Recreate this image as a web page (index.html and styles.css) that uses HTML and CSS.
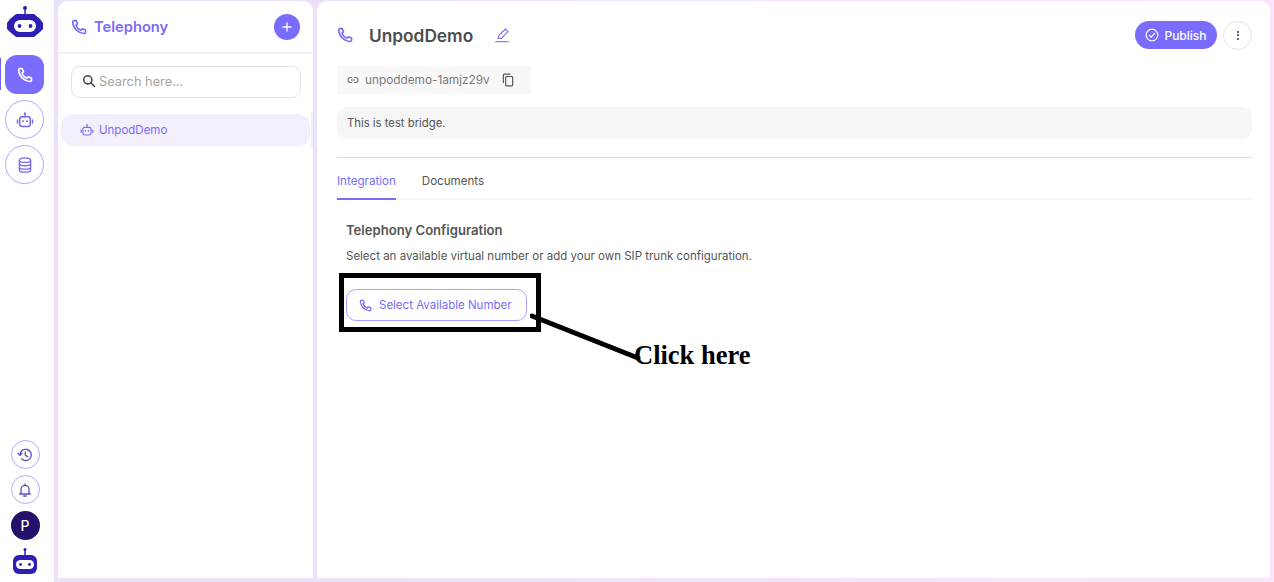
FILE: index.html
```html
<!DOCTYPE html>
<html lang="en">
<head>
<meta charset="utf-8">
<title>Telephony</title>
<link rel="stylesheet" href="styles.css">
</head>
<body>
<svg class="defs" width="0" height="0" aria-hidden="true">
  <defs>
    <symbol id="phone" viewBox="0 0 24 24"><path d="M4.500 2.500h3.300l2 4.800-2.400 2a14 14 0 0 0 7.600 7.600l2-2.400 4.800 2v3.300a2 2 0 0 1-2.200 2C10.500 21 3 13.500 2.500 4.700a2 2 0 0 1 2-2.200z" fill="none" stroke="currentColor" stroke-width="2.400" stroke-linejoin="round"/></symbol>
    <symbol id="bot" viewBox="0 0 24 24"><g fill="none" stroke="currentColor" stroke-width="2" stroke-linecap="round" stroke-linejoin="round"><rect x="5" y="7.500" width="14" height="13" rx="3"/><path d="M12 7.500V4M2 12v4M22 12v4"/></g><circle cx="12" cy="3" r="1.300" fill="currentColor"/><circle cx="9.500" cy="13.500" r="1.300" fill="currentColor"/><circle cx="14.500" cy="13.500" r="1.300" fill="currentColor"/></symbol>
  </defs>
</svg>

<div class="app">
  <nav class="rail">
    <svg class="logo" viewBox="0 0 36 32"><path d="M18 1v8" stroke="#2d1fb5" stroke-width="1.500"/><circle cx="18" cy="2" r="2" fill="#2d1fb5"/><path d="M9 8h18l6 5 3 4v6l-3 3-6 5H9l-6-5-3-3v-6l3-4z" fill="#2d1fb5"/><rect x="7" y="14" width="22" height="12" rx="6" fill="#fff"/><circle cx="12.500" cy="20" r="1.900" fill="#2d1fb5"/><circle cx="23.500" cy="20" r="1.900" fill="#2d1fb5"/></svg>
    <div class="rail-top">
      <a class="rail-active"><svg class="ic16"><use href="#phone"/></svg></a>
      <a class="rail-round"><svg class="ic18"><use href="#bot"/></svg></a>
      <a class="rail-round"><svg class="ic18" viewBox="0 0 24 24"><g fill="none" stroke="currentColor" stroke-width="1.800"><ellipse cx="12" cy="5.500" rx="7.500" ry="3"/><path d="M4.500 5.500v13c0 1.700 3.400 3 7.500 3s7.500-1.300 7.500-3v-13M4.500 10c0 1.700 3.400 3 7.500 3s7.500-1.300 7.500-3M4.500 14.500c0 1.700 3.400 3 7.500 3s7.500-1.300 7.500-3"/></g></svg></a>
    </div>
    <div class="rail-bottom">
      <a class="rail-small"><svg class="ic16" viewBox="0 0 24 24"><g fill="none" stroke="#5a4fc4" stroke-width="2" stroke-linecap="round" stroke-linejoin="round"><path d="M4.500 12a8.500 8.500 0 1 1 2.600 6.100"/><path d="M1.500 9.500l3 3 3-3M12.500 7.500v5l3.500 2"/></g></svg></a>
      <a class="rail-small"><svg class="ic16" viewBox="0 0 24 24"><g fill="none" stroke="#5a4fc4" stroke-width="2" stroke-linecap="round" stroke-linejoin="round"><path d="M6 18v-7a6 6 0 0 1 12 0v7M4 18h16M12 3v2M10 21h4"/></g></svg></a>
      <div class="avatar">P</div>
      <svg class="logo-small" viewBox="0 0 26 26"><path d="M13 1v7" stroke="#2d1fb5" stroke-width="1.500"/><circle cx="13" cy="1.500" r="1.500" fill="#2d1fb5"/><rect x="1" y="7" width="24" height="19" rx="6" fill="#2d1fb5"/><rect x="4" y="12" width="18" height="9" rx="4.500" fill="#fff"/><circle cx="8.500" cy="16.500" r="1.400" fill="#2d1fb5"/><circle cx="17.500" cy="16.500" r="1.400" fill="#2d1fb5"/></svg>
    </div>
  </nav>

  <aside class="side">
    <header class="side-head">
      <div class="side-title"><svg class="ic16"><use href="#phone"/></svg><span>Telephony</span></div>
      <button class="add" type="button">
        <svg width="12" height="12" viewBox="0 0 12 12"><path d="M6 1.500v9M1.500 6h9" stroke="#fff" stroke-width="1.300"/></svg>
      </button>
    </header>
    <div class="side-body">
      <div class="search">
        <svg class="ic14" viewBox="0 0 24 24"><g fill="none" stroke="#444" stroke-width="2.600" stroke-linecap="round"><circle cx="10" cy="10" r="7"/><path d="M15.500 15.500l6 6"/></g></svg>
        <span>Search here...</span>
      </div>
      <div class="item"><svg class="ic14"><use href="#bot"/></svg><span>UnpodDemo</span></div>
    </div>
  </aside>

  <main class="main">
    <header class="main-head">
      <div class="title-wrap">
        <svg class="ic16"><use href="#phone"/></svg>
        <h1>UnpodDemo</h1>
        <svg class="ic16 pencil" viewBox="0 0 24 24"><g fill="none" stroke="currentColor" stroke-width="1.700" stroke-linejoin="round"><path d="M6 17l1-4L17 3l4 4-10 10z"/><path d="M2 22h20"/></g></svg>
      </div>
      <div class="actions">
        <button class="publish" type="button">
          <svg class="ic14" viewBox="0 0 24 24"><g fill="none" stroke="#fff" stroke-width="2" stroke-linecap="round" stroke-linejoin="round"><circle cx="12" cy="12" r="10"/><path d="M7.500 12.500l3 3 6-6.500"/></g></svg>
          Publish
        </button>
        <button class="more" type="button"><i></i><i></i><i></i></button>
      </div>
    </header>

    <div class="slug">
      <svg class="ic12" viewBox="0 0 24 24"><path d="M10 7H7a5 5 0 0 0 0 10h3M14 7h3a5 5 0 0 1 0 10h-3M8 12h8" fill="none" stroke="#777" stroke-width="2.400"/></svg>
      <span>unpoddemo-1amjz29v</span>
      <svg class="ic14 copy" viewBox="0 0 24 24"><g fill="none" stroke="#555" stroke-width="2"><rect x="8" y="6" width="12" height="16" rx="1.500"/><path d="M16 2H6a2 2 0 0 0-2 2v13"/></g></svg>
    </div>
    <p class="desc">This is test bridge.</p>
    <hr class="rule">

    <div class="tabs">
      <a class="tab tab-active">Integration</a>
      <a class="tab">Documents</a>
    </div>

    <section class="config">
      <h2>Telephony Configuration</h2>
      <p>Select an available virtual number or add your own SIP trunk configuration.</p>
      <button class="select" type="button"><svg class="ic13"><use href="#phone"/></svg>Select Available Number</button>
    </section>
  </main>
</div>

<div class="callout-box"></div>
<svg class="callout-line" width="120" height="60"><path d="M2 3L108 45" stroke="#000" stroke-width="5" stroke-linecap="round"/></svg>
<div class="callout-text">Click here</div>
</body>
</html>
```
FILE: styles.css
```css
* { box-sizing: border-box; }
html, body { height: 100%; }
body {
  margin: 0;
  overflow: hidden;
  background: #fff;
  font-family: "Inter", "Liberation Sans", sans-serif;
  color: #555;
}
.defs { position: absolute; }
svg { display: block; }
.ic12 { width: 12px; height: 12px; flex: none; }
.ic13 { width: 13px; height: 13px; flex: none; }
.ic14 { width: 14px; height: 14px; flex: none; }
.ic16 { width: 16px; height: 16px; flex: none; }
.ic18 { width: 18px; height: 18px; flex: none; }

.app {
  display: flex;
  height: 582px;
  background: linear-gradient(90deg, #ece1fc 0, #ece1fc 30%, #fae6fb 100%);
}

.rail {
  width: 54px;
  flex: none;
  display: flex;
  flex-direction: column;
  align-items: center;
  background: #fff;
  padding: 6px 5px 8px 0;
  position: relative;
}
.rail::before {
  content: "";
  position: absolute;
  left: 0; top: 58px;
  width: 1px; height: 32px;
  background: #6f62fb;
}
.logo { width: 36px; height: 32px; flex: none; }
.rail-top { display: flex; flex-direction: column; align-items: center; gap: 6px; margin-top: 17px; }
.rail-active {
  width: 39px; height: 39px; border-radius: 12px;
  background: #796cff; color: #fff;
  display: flex; align-items: center; justify-content: center;
}
.rail-round {
  width: 39px; height: 39px; border-radius: 50%;
  border: 1px solid #b0a9ff; color: #7468f5; background: #fff;
  display: flex; align-items: center; justify-content: center;
}
.rail-bottom { margin-top: auto; padding-left: 1px; display: flex; flex-direction: column; align-items: center; gap: 6px; }
.rail-small {
  width: 29px; height: 29px; border-radius: 50%;
  border: 1px solid #b0a9ff; background: #fff;
  display: flex; align-items: center; justify-content: center;
}
.avatar {
  width: 29px; height: 29px; border-radius: 50%;
  margin-top: 1px;
  background: #25106b; color: #fff;
  font-size: 14px; font-weight: 500;
  display: flex; align-items: center; justify-content: center;
}
.logo-small { width: 26px; height: 26px; margin-top: 2px; }

.side {
  width: 255px;
  flex: none;
  margin: 1px 0 4px 4px;
  background: #fff;
  border-radius: 10px 10px 0 0;
  display: flex;
  flex-direction: column;
  position: relative;
}
.side::after {
  content: "";
  position: absolute;
  right: 0; top: 110px;
  width: 2px; height: 38px;
  background: #f0eff2;
}
.side-head {
  height: 53px;
  flex: none;
  display: flex;
  align-items: center;
  justify-content: space-between;
  padding: 0 13px;
  border-bottom: 2px solid #f1f0f2;
}
.side-title { display: flex; align-items: center; gap: 7px; color: #7a6cf8; font-size: 14.700px; font-weight: 600; }
.add {
  width: 26px; height: 26px; padding: 0; border: 0; border-radius: 50%;
  background: #796cff;
  display: flex; align-items: center; justify-content: center;
}
.side-body { padding: 12px 3px; }
.search {
  margin: 0 9px 0 10px;
  height: 32px;
  padding: 0 10px 2px;
  border: 1px solid #e2e2e2;
  border-radius: 9px;
  display: flex; align-items: center; gap: 3px;
  font-size: 12.800px;
  color: #a8a4a0;
}
.item {
  margin-top: 16px;
  height: 32px;
  border-radius: 12px;
  background: #f3effd;
  color: #7a6cf8;
  display: flex; align-items: center; gap: 5px;
  padding: 0 19px;
  font-size: 11.500px;
}

.main {
  flex: 1;
  min-width: 0;
  margin: 1px 4px 4px 4px;
  background: #fff;
  border-radius: 10px 10px 0 0;
  padding: 0 18px 0 20px;
}
.main-head { height: 65px; display: flex; align-items: center; justify-content: space-between; padding-top: 3px; }
.title-wrap { display: flex; align-items: center; color: #7a6cf8; }
h1 { margin: 0 21px 0 16px; font-size: 17.300px; font-weight: 600; color: #4d4d4d; }
.actions { display: flex; align-items: center; gap: 6px; }
.publish {
  height: 28px; width: 82px; padding: 0; border: 0; border-radius: 14px;
  background: #796cff; color: #fff;
  font: 500 12px "Inter", "Liberation Sans", sans-serif;
  display: flex; align-items: center; justify-content: center; gap: 5px;
}
.more {
  width: 29px; height: 29px; padding: 0; border: 1px solid #e5e5e5; border-radius: 50%;
  background: #fff;
  display: flex; flex-direction: column; align-items: center; justify-content: center; gap: 1.500px;
}
.more i { width: 2px; height: 2px; border-radius: 50%; background: #333; }

.slug {
  width: 194px; height: 28px;
  background: #f8f8f8;
  display: flex; align-items: center;
  padding: 0 10px;
  font-size: 11.800px;
  color: #7a7a7a;
}
.slug span { margin-left: 6px; white-space: nowrap; }
.copy { margin-left: 11px; }
.desc {
  margin: 13px 0 0;
  height: 32px;
  background: #f6f6f6;
  border-radius: 10px;
  padding: 0 10px;
  display: flex; align-items: center;
  font-size: 11.300px;
}
.rule { margin: 18px 0 0; border: 0; border-top: 1px solid #dfdfdf; }
.tabs { display: flex; gap: 26px; height: 42px; border-bottom: 2px solid #f6f6f6; }
.tab { height: 42px; display: flex; align-items: center; padding-top: 6px; border-bottom: 2px solid transparent; font-size: 11.600px; }
.tab-active { color: #7a6cf8; border-bottom-color: #7a6cf8; }

.config { padding: 22px 9px 0; }
h2 { margin: 0; font-size: 13.100px; font-weight: 600; line-height: 17px; }
.config p { margin: 9px 0 0; font-size: 11.500px; line-height: 16px; }
.select {
  margin-top: 25px;
  width: 181px; height: 32px;
  background: #fff;
  border: 1px solid #a9a1ff;
  border-radius: 10px;
  color: #7a6cf8;
  display: flex; align-items: center; gap: 7px;
  padding: 0 12px;
  font: 400 11.500px "Inter", "Liberation Sans", sans-serif;
  white-space: nowrap;
}

.callout-box { position: absolute; left: 339px; top: 273px; width: 202px; height: 59px; border: 5px solid #000; }
.callout-line { position: absolute; left: 530px; top: 313px; }
.callout-text {
  position: absolute; left: 634px; top: 340px;
  font: 700 26.500px/30px "Liberation Serif", serif; color: #000; white-space: nowrap;
}
```
